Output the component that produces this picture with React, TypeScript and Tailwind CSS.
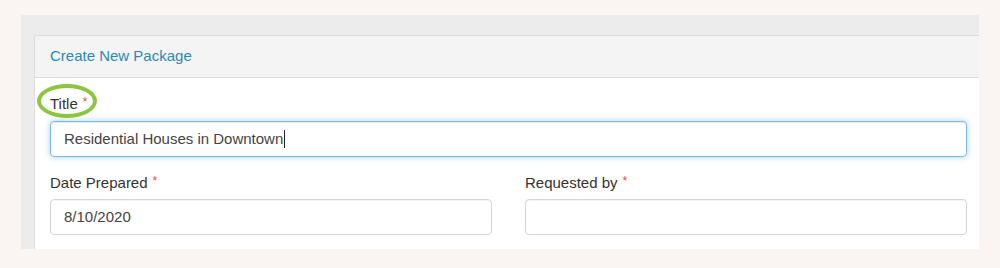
import React from "react";

function Label({ text }: { text: string }) {
  return (
    <div className="h-5 flex items-center text-[15px] leading-5 text-[#333]">
      <span>{text}</span>
      <span className="ml-[5px] text-[#e04b4b] text-[12px] leading-none -mt-[4px]">*</span>
    </div>
  );
}

export default function App() {
  return (
    <div
      className="w-[1000px] h-[268px] bg-[#faf4f3] pt-[15px] pl-[21px] pr-[21px] pb-[19px]"
      style={{ fontFamily: '"Liberation Sans", Arial, sans-serif' }}
    >
      <div className="h-[234px] bg-[#ececec] pt-[20px] pl-[13px] overflow-hidden">
        <div className="h-full bg-white border-l border-t border-[#dcdcdc] rounded-tl-[3px] flex flex-col">
          <div className="h-[42px] bg-[#f4f4f4] border-b border-[#dcdcdc] flex items-center pl-[15px] rounded-tl-[3px]">
            <span className="text-[15px] text-[#2a8ab2]">Create New Package</span>
          </div>
          <div className="pl-[15px] pr-[12px] pt-[16px] flex flex-col">
            <div className="relative">
              <Label text="Title" />
              <div className="absolute left-[-13px] top-[-10px] w-[60px] h-[34px] rounded-[50%] border-[4px] border-[#8cc63e] pointer-events-none" />
            </div>
            <div className="mt-[7px] h-[36px] rounded-[4px] border border-[#7ab8ea] bg-white flex items-center pl-[13px] text-[15px] text-[#444] shadow-[inset_0_1px_1px_rgba(0,0,0,0.075),0_0_6px_rgba(102,175,233,0.55)]">
              <span>Residential Houses in Downtown</span>
              <span className="ml-[1px] w-px h-[18px] bg-[#222]" />
            </div>
            <div className="mt-[16px] grid grid-cols-2 gap-x-[33px]">
              <div className="flex flex-col">
                <Label text="Date Prepared" />
                <div className="mt-[6px] h-[36px] rounded-[4px] border border-[#d4d4d4] bg-white flex items-center pl-[13px] text-[15px] text-[#444] shadow-[inset_0_1px_1px_rgba(0,0,0,0.05)]">
                  8/10/2020
                </div>
              </div>
              <div className="flex flex-col">
                <Label text="Requested by" />
                <div className="mt-[6px] h-[36px] rounded-[4px] border border-[#d4d4d4] bg-white shadow-[inset_0_1px_1px_rgba(0,0,0,0.05)]" />
              </div>
            </div>
          </div>
        </div>
      </div>
    </div>
  );
}
